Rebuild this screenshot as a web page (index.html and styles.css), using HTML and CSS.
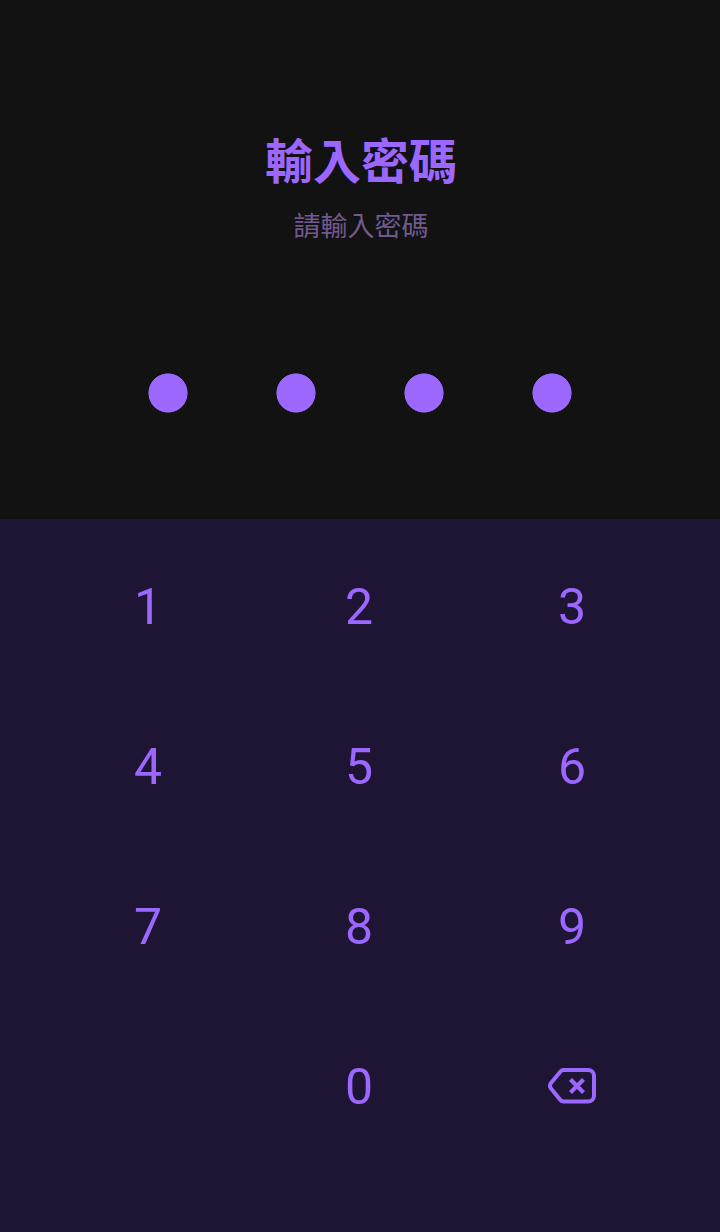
FILE: index.html
```html
<!DOCTYPE html>
<html lang="zh-Hant">
<head>
  <meta charset="UTF-8" />
  <meta name="viewport" content="width=device-width, initial-scale=1.0" />
  <title>輸入密碼</title>
  <link rel="stylesheet" href="styles.css">
</head>
<body>
  <main class="lock">
    <section class="prompt">
      <h1 class="prompt-title">輸入密碼</h1>
      <p class="prompt-hint">請輸入密碼</p>
      <div class="dots">
        <span class="dot"></span>
        <span class="dot"></span>
        <span class="dot"></span>
        <span class="dot"></span>
      </div>
    </section>
    <section class="keypad">
      <button class="key">1</button>
      <button class="key">2</button>
      <button class="key">3</button>
      <button class="key">4</button>
      <button class="key">5</button>
      <button class="key">6</button>
      <button class="key">7</button>
      <button class="key">8</button>
      <button class="key">9</button>
      <span class="key-empty"></span>
      <button class="key">0</button>
      <button class="key" aria-label="Delete">
        <svg class="key-icon" viewBox="0 0 48 36" fill="none" stroke="currentColor" stroke-width="4">
          <path d="M15.500 2H40a6 6 0 0 1 6 6v19.500a6 6 0 0 1-6 6H15.500a4 4 0 0 1-3-1.400L3 20.500a4.500 4.500 0 0 1 0-5.500L12.500 3.400A4 4 0 0 1 15.500 2z" />
          <path d="M22.500 11.500l13 13M35.500 11.500l-13 13" stroke-width="4.200" />
        </svg>
      </button>
    </section>
  </main>
</body>
</html>
```

FILE: styles.css
```css
* { box-sizing: border-box; }
html, body { height: 100%; margin: 0; padding: 0; }
body {
  background: #121212;
  font-family: Roboto, "Noto Sans CJK TC", sans-serif;
  color: #9c67ff;
}
.lock {
  height: 100%;
  display: flex;
  flex-direction: column;
}
.prompt {
  height: 519px;
  padding-top: 124px;
  text-align: center;
}
.prompt-title {
  margin: 0;
  padding-left: 2px;
  font-family: "Noto Sans CJK TC", sans-serif;
  font-size: 48px;
  line-height: 68px;
  font-weight: 700;
}
.prompt-hint {
  margin: 15px 0 0;
  padding-left: 2px;
  font-family: "Noto Sans CJK TC", sans-serif;
  font-size: 27px;
  line-height: 36px;
  color: #71598f;
}
.dots {
  display: flex;
  justify-content: center;
  gap: 88px;
  margin-top: 130px;
}
.dot {
  width: 40px;
  height: 40px;
  background: radial-gradient(circle, #9c67ff 19.2px, transparent 19.9px);
}
.keypad {
  flex: 1;
  background: #1e1433;
  display: grid;
  grid-template-columns: 212px 210px 216px;
  grid-auto-rows: 160px;
  padding: 8px 42px 0;
}
.key {
  background: none;
  border: none;
  padding: 0;
  color: inherit;
  font-family: inherit;
  font-size: 50px;
  display: flex;
  align-items: center;
  justify-content: center;
}
.key-icon {
  width: 48px;
  height: 36px;
  margin-bottom: 2px;
}
```
